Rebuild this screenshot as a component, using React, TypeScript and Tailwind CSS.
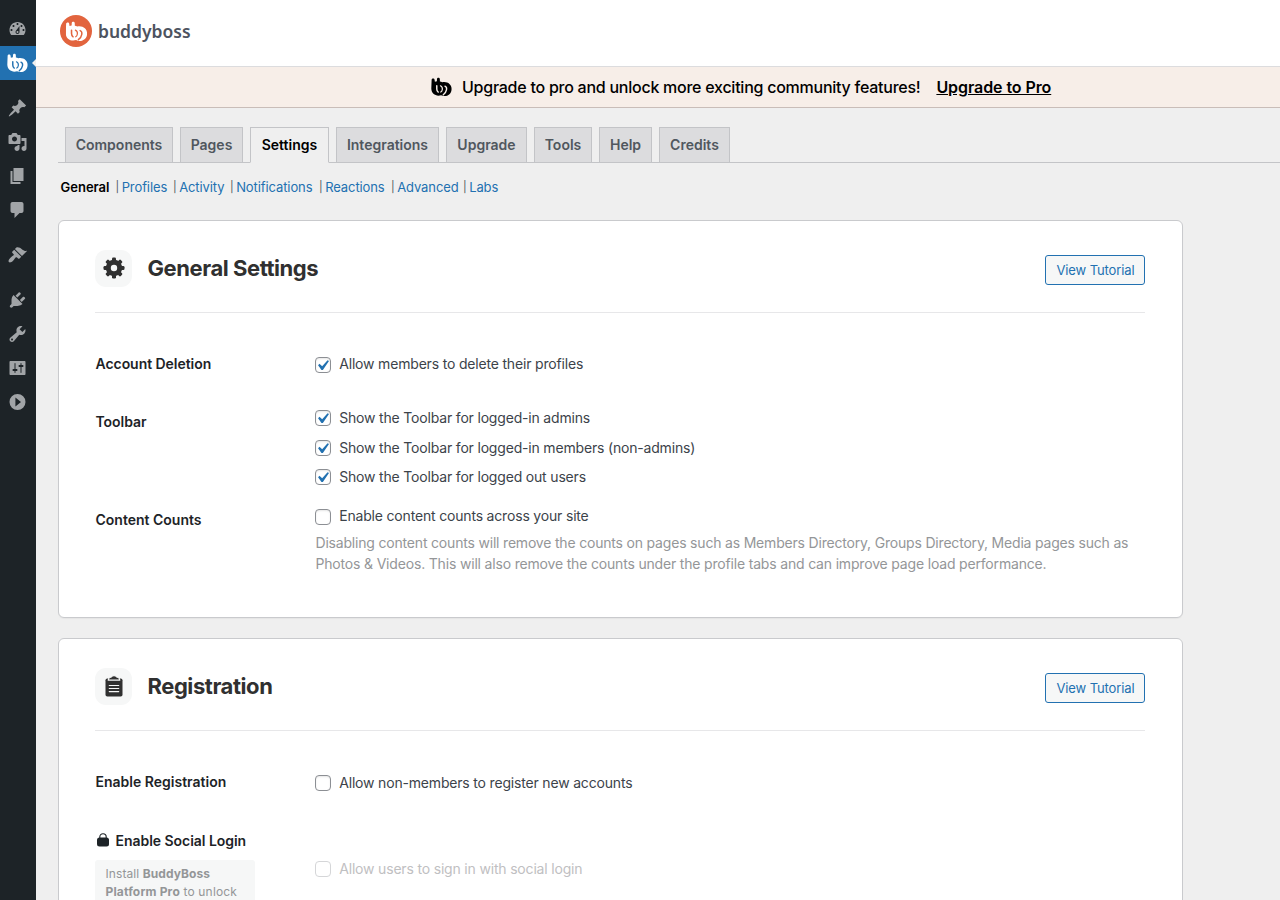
import React, { useId } from "react";

const icons = {
  dashboard:
    "M3.76 16h12.48c1.1-1.37 1.76-3.11 1.76-5 0-4.42-3.58-8-8-8s-8 3.58-8 8c0 1.89.66 3.63 1.76 5zM10 4c.55 0 1 .45 1 1s-.45 1-1 1-1-.45-1-1 .45-1 1-1zM6 6c.55 0 1 .45 1 1s-.45 1-1 1-1-.45-1-1 .45-1 1-1zm8 0c.55 0 1 .45 1 1s-.45 1-1 1-1-.45-1-1 .45-1 1-1zm-5.37 5.55L12 7v6c0 1.1-.9 2-2 2s-2-.9-2-2c0-.57.24-1.08.63-1.45zM4 10c.55 0 1 .45 1 1s-.45 1-1 1-1-.45-1-1 .45-1 1-1zm12 0c.55 0 1 .45 1 1s-.45 1-1 1-1-.45-1-1 .45-1 1-1zm-5 3c0-.55-.45-1-1-1s-1 .45-1 1 .45 1 1 1 1-.45 1-1z",
  posts:
    "M10.44 3.02l1.82-1.82 6.36 6.35-1.83 1.82c-1.05-.68-2.48-.57-3.41.36l-.75.75c-.92.93-1.04 2.35-.35 3.41l-1.83 1.82-2.41-2.41-2.8 2.79c-.42.42-3.38 2.71-3.8 2.29s1.86-3.39 2.28-3.81l2.79-2.79L4.1 9.36l1.83-1.82c1.05.69 2.48.57 3.4-.36l.75-.75c.93-.92 1.05-2.35.36-3.41z",
  media:
    "M13 11V4c0-.55-.45-1-1-1h-1.67L9 1H5L3.67 3H2c-.55 0-1 .45-1 1v7c0 .55.45 1 1 1h10c.55 0 1-.45 1-1zM7 4.5c1.38 0 2.5 1.12 2.5 2.5S8.38 9.5 7 9.5 4.5 8.38 4.5 7 5.62 4.5 7 4.5zM14 6h5v10.5c0 1.38-1.12 2.5-2.5 2.5S14 17.88 14 16.5s1.12-2.5 2.5-2.5c.17 0 .34.02.5.05V9h-3V6zm-4 8.05V13h2v3.5c0 1.38-1.12 2.5-2.5 2.5S7 17.88 7 16.5 8.12 14 9.5 14c.17 0 .34.02.5.05z",
  pages: "M6 15V2h10v13H6zm-1 1h8v2H3V5h2v11z",
  comments:
    "M5 2h9c1.1 0 2 .9 2 2v7c0 1.1-.9 2-2 2h-2l-5 5v-5H5c-1.1 0-2-.9-2-2V4c0-1.1.9-2 2-2z",
  appearance:
    "M14.48 11.06L7.41 3.99l1.5-1.5c.5-.56 2.3-.47 3.51.32 1.21.8 1.43 1.28 2.91 2.1 1.18.64 2.45 1.26 4.45.85zm-.71.71L6.7 4.7 4.93 6.47c-.39.39-.39 1.02 0 1.41l1.06 1.06c.39.39.39 1.03 0 1.42-.6.6-1.43 1.11-2.21 1.69-.35.26-.7.53-1.01.84C1.43 14.23.4 16.08 1.4 17.07c.99 1 2.84-.03 4.18-1.36.31-.31.58-.66.85-1.02.57-.78 1.08-1.61 1.69-2.21.39-.39 1.02-.39 1.41 0l1.06 1.06c.39.39 1.02.39 1.41 0z",
  plugins:
    "M13.11 4.36L9.87 7.6 8 5.73l3.24-3.24c.35-.34 1.05-.2 1.56.32.52.51.66 1.21.31 1.55zm-8 1.77l.91-1.12 9.01 9.01-1.19.84c-.71.71-2.63 1.16-3.82 1.16H6.14L4.9 17.26c-.59.59-1.54.59-2.12 0-.59-.58-.59-1.53 0-2.12l1.24-1.24v-3.88c0-1.13.4-3.19 1.09-3.89zm7.26 3.97l3.24-3.24c.34-.35 1.04-.21 1.55.31.52.51.66 1.21.31 1.55l-3.24 3.25z",
  tools:
    "M16.68 9.77c-1.34 1.34-3.3 1.67-4.95.99l-5.41 6.52c-.99.99-2.59.99-3.58 0s-.99-2.59 0-3.57l6.52-5.42c-.68-1.65-.35-3.61.99-4.95 1.28-1.28 3.12-1.62 4.72-1.06l-2.89 2.89 2.82 2.82 2.86-2.87c.53 1.58.18 3.39-1.08 4.65zM3.81 16.21c.4.39 1.04.39 1.43 0 .4-.4.4-1.04 0-1.43-.39-.4-1.03-.4-1.43 0-.39.39-.39 1.03 0 1.43z",
  settings:
    "M18 16V4c0-.55-.45-1-1-1H3c-.55 0-1 .45-1 1v12c0 .55.45 1 1 1h14c.55 0 1-.45 1-1zM8 11h1c.55 0 1 .45 1 1s-.45 1-1 1H8v1.5c0 .28-.22.5-.5.5s-.5-.22-.5-.5V13H6c-.55 0-1-.45-1-1s.45-1 1-1h1V5.500c0-.28.22-.5.5-.5s.5.22.5.5V11zm5-2h-1c-.55 0-1-.45-1-1s.45-1 1-1h1V5.500c0-.28.22-.5.5-.5s.5.22.5.5V7h1c.55 0 1 .45 1 1s-.45 1-1 1h-1v5.500c0 .28-.22.5-.5.5s-.5-.22-.5-.5V9z",
  collapse: "M10 2a8 8 0 1 0 0 16 8 8 0 0 0 0-16zM7.900 5.600l5.600 4.400-5.600 4.400z",
};

function MenuIcon({ d }: { d: string }) {
  return (
    <div className="flex h-[34px] items-center pl-[7px]">
      <svg viewBox="-0.5 0 20 20" className="size-5 fill-[#a1a4a7]">
        <path fillRule="evenodd" d={d} />
      </svg>
    </div>
  );
}

function BossMark({ className }: { className: string }) {
  const id = useId();
  return (
    <svg viewBox="0 0 20 19" className={className} fill="none">
      <mask id={id} maskUnits="userSpaceOnUse" x="0" y="0" width="20" height="19">
        <rect width="20" height="19" fill="#fff" />
        <g stroke="#000" strokeLinecap="round">
          <path strokeWidth="1.400" d="M5.500 8.400v3c0 1.400.5 2.400 1.400 2.900" />
          <path strokeWidth="1.100" d="M9 8.300c1.500.7 2 2 1.800 3.500-.2 1.300-.7 2.100-1.500 2.500" />
          <path strokeWidth="1.300" d="M13.300 8.700c1.300.5 1.800 1.700 1.500 3.300-.3 1.900-1.500 3.600-3.100 4.900" />
        </g>
      </mask>
      <g mask={`url(#${id})`}>
        <path
          fill="currentColor"
          d="M.6 2.700C.700.800 3.300.900 3.400 2.500l.3 2.100 1.900-.5.100-2.200c.1-1.600 2.600-1.600 2.700 0l.1 2.400c.8.100 1.500.3 2.200.7 4.700-1 8.900 1.800 8.900 6.300 0 4.200-3.100 6.800-6.800 6.800-1.200 0-2.300-.3-3.200-.8C5.200 18.800.300 16.200.3 11z"
        />
      </g>
    </svg>
  );
}

function Check({ checked = false, faded = false }: { checked?: boolean; faded?: boolean }) {
  return (
    <span
      className={
        faded
          ? "flex size-4 shrink-0 items-center justify-center rounded-[4px] border border-[#d5d6d8] bg-white"
          : "flex size-4 shrink-0 items-center justify-center rounded-[4px] border border-[#8c8f94] bg-white shadow-[inset_0_1px_2px_rgba(0,0,0,0.1)]"
      }
    >
      {checked && (
        <svg viewBox="0 0 20 20" className="-ml-px size-[21px] shrink-0 fill-[#2271b1]">
          <path d="M14.83 4.89l1.34.94-5.81 8.38H9.02L5.78 9.67l1.34-1.25 2.57 2.4z" />
        </svg>
      )}
    </span>
  );
}

type OptionProps = { text: string; checked?: boolean; faded?: boolean; raised?: boolean; className: string };

function Option({ text, checked, faded, raised, className }: OptionProps) {
  return (
    <label className={"flex h-5 items-center gap-2 " + className}>
      <Check checked={checked} faded={faded} />
      <span className={(raised ? "pb-1 " : "pb-[2px] ") + "pl-[0.2px] tracking-[-0.18px] " + (faded ? "text-[#bfc0c2]" : "")}>{text}</span>
    </label>
  );
}

function CardHeader({ title, children }: { title: string; children: React.ReactNode }) {
  return (
    <header className="flex h-[92px] justify-between border-b border-[#e7e7e9]">
      <div className="mt-[29px] flex h-9 items-center gap-[15.500px]">
        <span className="flex size-[37px] items-center justify-center rounded-[11px] bg-[#f6f7f7]">{children}</span>
        <h2 className="text-[22px] leading-7 font-bold tracking-[-0.44px] text-[#303030]">{title}</h2>
      </div>
      <button className="mt-[34px] h-[30px] w-[100px] rounded-[3px] border border-[#2271b1] bg-[#f6f7f7] pt-[2px] pl-px text-[13px] tracking-[-0.1px] text-[#2271b1]">
        View Tutorial
      </button>
    </header>
  );
}

const tabs: [string, string][] = [
  ["Components", "w-[108px]"],
  ["Pages", "w-[63px]"],
  ["Settings", "w-[79px]"],
  ["Integrations", "w-[103px]"],
  ["Upgrade", "w-[81px]"],
  ["Tools", "w-[58px]"],
  ["Help", "w-[53px]"],
  ["Credits", "w-[71px]"],
];

const sections: [string, string][] = [
  ["Profiles", "w-[57.5px]"],
  ["Activity", "w-[57px]"],
  ["Notifications", "w-[89px]"],
  ["Reactions", "w-[72px]"],
  ["Advanced", "w-[72px]"],
  ["Labs", "w-[40px]"],
];

const gearTeeth = [0, 45, 90, 135, 180, 225, 270, 315];

export default function App() {
  return (
    <div className="flex h-[900px] w-[1280px] overflow-hidden bg-[#efefef] font-['Inter',sans-serif] text-[14px] text-[#3c434a]">
      <aside className="w-9 shrink-0 bg-[#1d2327] pt-3">
        <MenuIcon d={icons.dashboard} />
        <div className="relative flex h-[34px] items-center bg-[#2271b1] pl-[7px] text-white">
          <BossMark className="h-5 w-[21px]" />
          <span className="absolute top-[13px] right-0 size-0 border-y-[4px] border-r-[4px] border-y-transparent border-r-[#efefef]" />
        </div>
        <div className="h-[11px]" />
        <MenuIcon d={icons.posts} />
        <MenuIcon d={icons.media} />
        <MenuIcon d={icons.pages} />
        <MenuIcon d={icons.comments} />
        <div className="h-[11px]" />
        <MenuIcon d={icons.appearance} />
        <div className="h-[11px]" />
        <MenuIcon d={icons.plugins} />
        <MenuIcon d={icons.tools} />
        <MenuIcon d={icons.settings} />
        <MenuIcon d={icons.collapse} />
      </aside>

      <main className="min-w-0 flex-1">
        <div className="flex h-[67px] items-start border-b border-[#dcdcde] bg-white pt-[15px] pl-6">
          <span className="flex size-8 items-center justify-center rounded-full bg-[#e2643e] text-white">
            <BossMark className="h-[21px] w-[23px]" />
          </span>
          <span className="ml-[6px] font-['Noto_Sans',sans-serif] text-[17.500px] leading-8 font-semibold text-[#4d5360]">buddyboss</span>
        </div>
        <div className="flex h-[41px] items-center border-b border-[#c9bdb8] bg-[#f7eee8] pl-[395px] text-[16px] font-medium text-black">
          <BossMark className="h-5 w-[21px]" />
          <span className="ml-[10px] tracking-[-0.25px] whitespace-nowrap">Upgrade to pro and unlock more exciting community features!</span>
          <a className="ml-4 font-semibold tracking-[-0.08px] whitespace-nowrap underline">Upgrade to Pro</a>
        </div>

        <nav className="ml-[22px] flex h-[55px] items-end gap-[7px] border-b border-[#c3c4c7] pl-[7px]">
          {tabs.map(([label, width]) => (
            <a
              key={label}
              className={
                (label === "Settings"
                  ? "-mb-px h-9 border-b border-b-[#efefef] bg-[#efefef] pb-px text-black "
                  : "h-[35px] bg-[#dcdcde] pb-px text-[#50575e] ") +
                "flex items-center justify-center border-x border-t border-x-[#c3c4c7] border-t-[#c3c4c7] font-semibold " +
                width
              }
            >
              {label}
            </a>
          ))}
        </nav>

        <nav className="ml-[24.500px] flex h-[57px] items-start pt-[14px] text-[13px] leading-5">
          <a className="w-[55px] font-semibold text-black">General</a>
          {sections.map(([label, width]) => (
            <span key={label} className={"flex items-center whitespace-nowrap " + width}>
              <span className="text-[11px] text-[#50575e]">|</span>
              <a className="ml-[2.500px] tracking-[-0.1px] text-[#2271b1]">{label}</a>
            </span>
          ))}
        </nav>

        <section className="ml-[22px] h-[398px] w-[1125px] rounded-[6px] border border-[#c9cacd] bg-white pr-[37px] pl-9 shadow-[0_1px_1px_rgba(0,0,0,0.04)]">
          <CardHeader title="General Settings">
            <svg viewBox="-11 -11 22 22" className="size-[22px]">
              <circle r="5.700" fill="none" stroke="#303030" strokeWidth="5" />
              {gearTeeth.map((angle) => (
                <rect key={angle} x="-2" y="-10.500" width="4" height="5" rx="1.200" fill="#303030" transform={`rotate(${angle})`} />
              ))}
            </svg>
          </CardHeader>
          <div className="grid grid-cols-[220px_1fr]">
            <h3 className="mt-[41px] pl-[0.500px] leading-5 font-semibold tracking-[-0.05px] text-[#1d2327]">Account Deletion</h3>
            <Option checked raised className="mt-[42px]" text="Allow members to delete their profiles" />
            <h3 className="mt-[37px] pl-[0.500px] leading-5 font-semibold tracking-[-0.05px] text-[#1d2327]">Toolbar</h3>
            <div className="pt-[33px]">
              <Option checked className="" text="Show the Toolbar for logged-in admins" />
              <Option checked className="mt-[10px]" text="Show the Toolbar for logged-in members (non-admins)" />
              <Option checked className="mt-[9px]" text="Show the Toolbar for logged out users" />
            </div>
            <h3 className="mt-[23px] pl-[0.500px] leading-5 font-semibold text-[#1d2327]">Content Counts</h3>
            <div className="pt-5">
              <Option raised className="" text="Enable content counts across your site" />
              <p className="mt-[5px] pl-[0.500px] leading-[21px] tracking-[-0.19px] whitespace-nowrap text-[#949698]">
                Disabling content counts will remove the counts on pages such as Members Directory, Groups Directory, Media pages such as
                <br />
                <span className="tracking-[-0.178px]">
                  Photos &amp; Videos. This will also remove the counts under the profile tabs and can improve page load performance.
                </span>
              </p>
            </div>
          </div>
        </section>

        <section className="mt-5 ml-[22px] h-[398px] w-[1125px] rounded-[6px] border border-[#c9cacd] bg-white pr-[37px] pl-9">
          <CardHeader title="Registration">
            <svg viewBox="0 0 18 22" className="h-[22px] w-[18px]">
              <rect x=".5" y="3.500" width="17" height="18" rx="1.800" className="fill-[#303030]" />
              <path
                className="fill-[#303030] stroke-[#f6f7f7]"
                strokeWidth="1.200"
                d="M3.300 5.200C3.300 3.200 4.500 2.300 6.300 2 7 .2 11 .2 11.700 2c1.800.3 3 1.200 3 3.200z"
              />
              <path stroke="#f6f7f7" strokeWidth="1.200" strokeLinecap="round" d="M4.300 10.500h9.400M4.300 13.500h9.400M4.300 16.600h9.400" />
            </svg>
          </CardHeader>
          <div className="grid grid-cols-[220px_1fr]">
            <h3 className="mt-[41px] pl-[0.500px] leading-5 font-semibold text-[#1d2327]">Enable Registration</h3>
            <Option className="mt-[42px]" text="Allow non-members to register new accounts" />
            <div className="pt-[38px]">
              <h3 className="flex items-center leading-5 font-semibold tracking-[-0.04px] text-[#1d2327]">
                <svg viewBox="0 0 14 16" className="mr-[5.500px] ml-px h-4 w-[14px]">
                  <rect x="1" y="4.500" width="12" height="9" rx="2.500" className="fill-[#1d2327]" />
                  <path d="M3.800 6V4a3.200 3.200 0 0 1 6.400 0V6" fill="none" stroke="#1d2327" strokeWidth="1.100" />
                </svg>
                Enable Social Login
              </h3>
              <div className="mt-[9px] flex h-20 w-40 flex-col rounded-[3px] bg-[#f6f7f7] px-[10.500px] pt-[5px] text-[12px] leading-[18px] whitespace-nowrap text-[#949698]">
                <p className="tracking-[0.08px]">
                  Install <b className="font-bold">BuddyBoss</b>
                </p>
                <p className="tracking-[0.17px]">
                  <b className="font-bold">Platform Pro</b> to unlock
                </p>
              </div>
            </div>
            <Option faded className="mt-[66px]" text="Allow users to sign in with social login" />
          </div>
        </section>
      </main>
    </div>
  );
}
